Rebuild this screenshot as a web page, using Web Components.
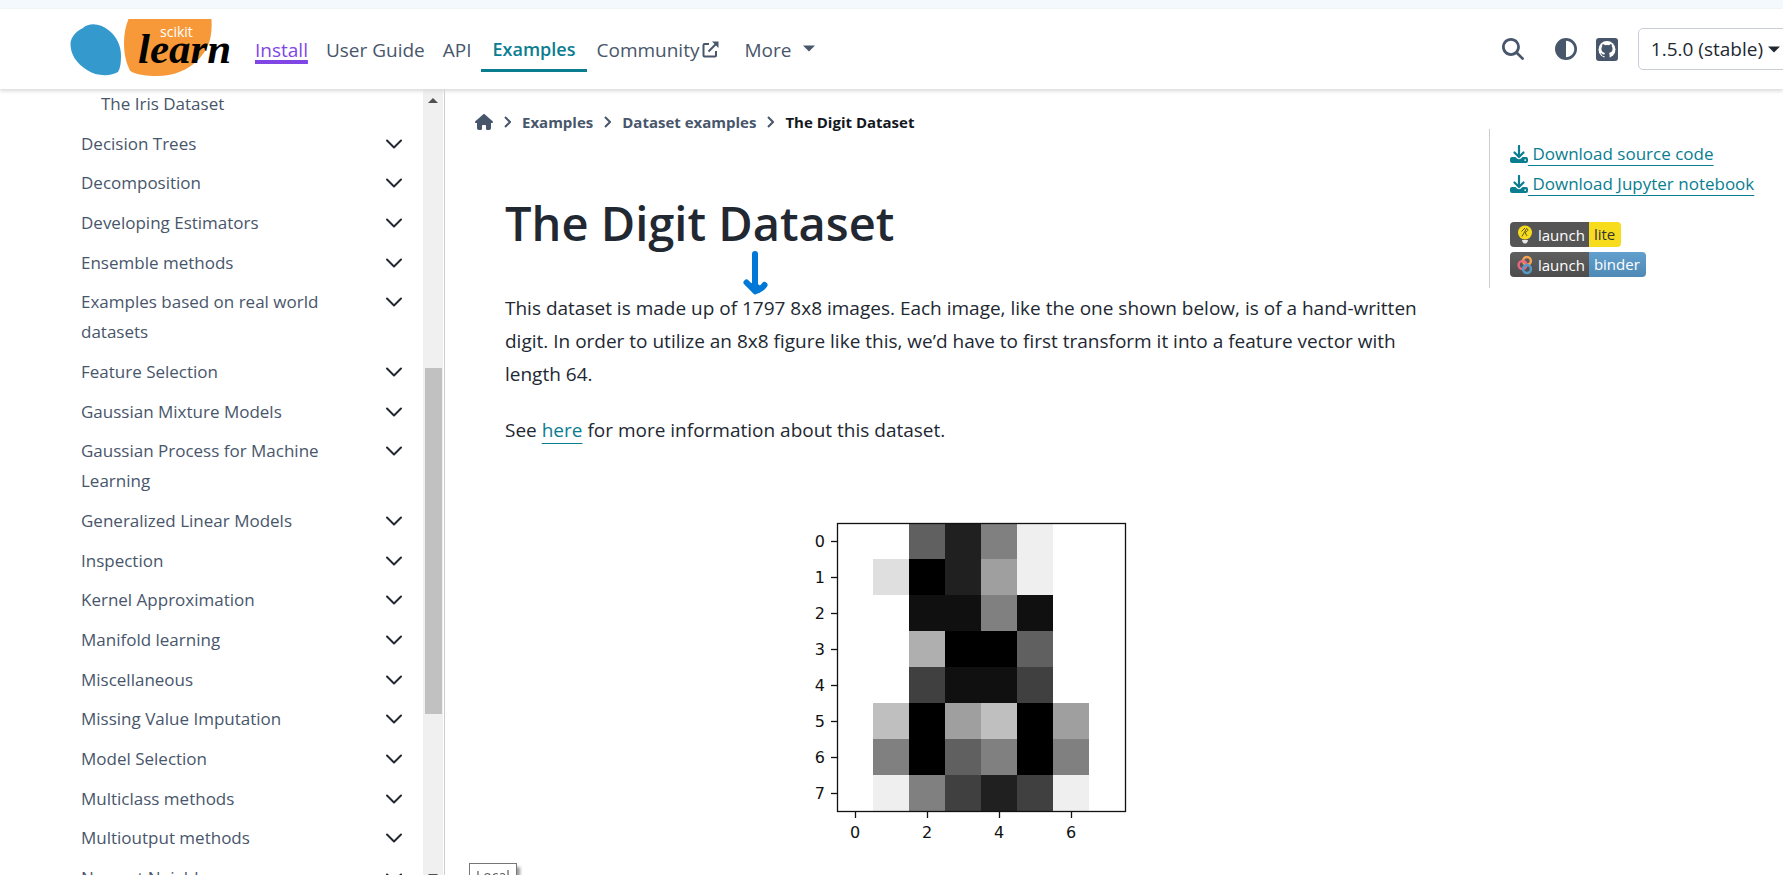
<!DOCTYPE html>
<html lang="en">
<head>
<meta charset="utf-8">
<title>The Digit Dataset — scikit-learn 1.5.0 documentation</title>
<style>
  :root {
    --text: #222832;
    --muted: #48566b;
    --link: #0a7d91;
    --visited: #8045e5;
    --line: #c9ced6;
    --ui: "Open Sans", "Noto Sans", sans-serif;
  }
  html, body { height: 100%; }
  body {
    margin: 0;
    overflow: hidden;
    background: #fff;
    color: var(--text);
    font-family: var(--ui);
  }
</style>
</head>
<body>
<doc-page>
  <doc-header slot="header"></doc-header>
  <doc-sidebar slot="sidebar">
    <doc-entry nested>The Iris Dataset</doc-entry>
    <doc-entry>Decision Trees</doc-entry>
    <doc-entry>Decomposition</doc-entry>
    <doc-entry>Developing Estimators</doc-entry>
    <doc-entry>Ensemble methods</doc-entry>
    <doc-entry>Examples based on real world datasets</doc-entry>
    <doc-entry>Feature Selection</doc-entry>
    <doc-entry>Gaussian Mixture Models</doc-entry>
    <doc-entry>Gaussian Process for Machine Learning</doc-entry>
    <doc-entry>Generalized Linear Models</doc-entry>
    <doc-entry>Inspection</doc-entry>
    <doc-entry>Kernel Approximation</doc-entry>
    <doc-entry>Manifold learning</doc-entry>
    <doc-entry>Miscellaneous</doc-entry>
    <doc-entry>Missing Value Imputation</doc-entry>
    <doc-entry>Model Selection</doc-entry>
    <doc-entry>Multiclass methods</doc-entry>
    <doc-entry>Multioutput methods</doc-entry>
    <doc-entry>Nearest Neighbors</doc-entry>
  </doc-sidebar>
  <doc-breadcrumbs slot="main"></doc-breadcrumbs>
  <doc-article slot="main">
    <digit-plot></digit-plot>
  </doc-article>
  <doc-aside slot="aside"></doc-aside>
  <status-tip slot="tip">Local</status-tip>
</doc-page>

<template id="t-page">
  <style>
    :host { display: flex; flex-direction: column; height: 100vh; }
    .strip { flex: none; height: 9px; background: #f3f9fc; }
    .body { flex: 1; min-height: 0; display: flex; }
    main { flex: 1; min-width: 0; overflow: hidden; padding: 18px 40px 0 30px; }
  </style>
  <div class="strip"></div>
  <slot name="header"></slot>
  <div class="body">
    <slot name="sidebar"></slot>
    <main><slot name="main"></slot></main>
    <slot name="aside"></slot>
  </div>
  <slot name="tip"></slot>
</template>

<template id="t-logo">
  <style>
    :host { display: block; width: 164px; height: 58px; }
    svg { display: block; }
    .small { font: 14px "Open Sans", sans-serif; fill: #fff; }
    .big { font: italic bold 43px "Liberation Serif", serif; fill: #010101; }
  </style>
  <svg width="164" height="58" viewBox="0 0 164 58" role="img" aria-label="scikit-learn">
    <path fill="#3499cd" d="M13 9C19 3.500 30 4 39 11.500C47 18 51 27 51 37C51 43 50.500 49 48 53C41 57.500 26 57.500 17 51C6 44 0.500 35 0.500 25C0.500 18 6.500 12 13 9Z"/>
    <path fill="#f89939" d="M58.500 0H141.500C142.500 18 139 29 129 40C118 51.500 103 57 87 57C76 57 64 55.500 60 51.500C56 44 54 35 54 24C54 15 55.500 7 58.500 0Z"/>
    <text class="small" x="90" y="18">scikit</text>
    <text class="big" x="68" y="44">learn</text>
  </svg>
</template>

<template id="t-header">
  <style>
    :host {
      position: relative; z-index: 2; flex: none; display: flex; align-items: center;
      height: 80px; padding-left: 70px; box-sizing: border-box; overflow: visible;
      background: #fff; box-shadow: 0 2px 4px #d8d8d8; color: var(--muted); font-size: 19px; line-height: 30px;
    }
    .home { margin: 0 12px 2px 0; text-decoration: none; }
    nav { display: flex; align-items: center; flex: 1; }
    nav a { padding: 0 9px; color: inherit; text-decoration: none; white-space: nowrap; }
    nav a, button.more { margin-top: 2px; }
    nav a.visited { color: var(--visited); text-decoration: underline 4px; text-underline-offset: 3px; text-decoration-skip-ink: none; }
    nav a.current {
      margin-top: 0; padding: 8px 12px 5px; border-bottom: 3px solid var(--link);
      color: var(--link); font-size: 18px; font-weight: 600;
    }
    nav svg { margin-left: 3px; vertical-align: -1px; }
    button { font: inherit; color: inherit; background: none; border: 0; padding: 0; }
    .more { display: flex; align-items: center; gap: 9px; margin-left: 7px; padding: 0 9px; }
    .more svg { margin-bottom: 3px; }
    .tools { display: flex; align-items: center; }
    .tools button, .tools a { display: flex; color: inherit; }
    .theme { margin-left: 31px; }
    .git { margin-left: 19px; }
    .tools .version {
      align-items: center; gap: 5px; box-sizing: border-box; height: 42px; margin: 0 -10px 0 20px; padding: 0 12px;
      border: 1px solid var(--line); border-radius: 5px; color: var(--text); white-space: nowrap;
    }
  </style>
  <a class="home" href="#home"><site-logo></site-logo></a>
  <nav aria-label="Site">
    <a class="visited" href="#install">Install</a>
    <a href="#guide">User Guide</a>
    <a href="#api">API</a>
    <a class="current" href="#examples">Examples</a>
    <a href="#community">Community<svg width="17" height="17" viewBox="0 0 17 17" fill="none" stroke="currentColor" stroke-width="2" aria-hidden="true"><path d="M7 3H2.500Q1.500 3 1.500 4V14.500Q1.500 15.500 2.500 15.500H13Q14 15.500 14 14.500V10"/><path d="M6.500 10.500L14.500 2.500"/><path d="M10 0.500H16.500V7Z" fill="currentColor" stroke="none"/></svg></a>
    <button class="more" type="button">More
      <svg width="12" height="7" viewBox="0 0 12 7" aria-hidden="true"><path fill="currentColor" d="M0 .500H12L6 6.500Z"/></svg>
    </button>
  </nav>
  <div class="tools">
    <button type="button" aria-label="Search">
      <svg width="22" height="22" viewBox="0 0 512 512"><path fill="currentColor" d="M416 208c0 45.900-14.900 88.300-40 122.700L502.600 457.400c12.500 12.500 12.500 32.800 0 45.300s-32.800 12.500-45.300 0L330.700 376c-34.400 25.200-76.800 40-122.700 40C93.100 416 0 322.900 0 208S93.100 0 208 0S416 93.100 416 208zM208 352a144 144 0 1 0 0-288 144 144 0 1 0 0 288z"/></svg>
    </button>
    <button class="theme" type="button" aria-label="Colour theme">
      <svg width="22" height="22" viewBox="0 0 512 512"><path fill="currentColor" d="M448 256c0-106-86-192-192-192V448c106 0 192-86 192-192zM0 256a256 256 0 1 1 512 0A256 256 0 1 1 0 256z"/></svg>
    </button>
    <a class="git" href="#github" aria-label="GitHub">
      <svg width="22" height="23" viewBox="0 0 22 23"><rect width="22" height="23" rx="3" fill="currentColor"/><circle cx="11" cy="11.500" r="8.500" fill="#fff"/><path fill="currentColor" d="M6.400 6.400C7.500 6.200 8.500 6.900 9.100 7.300Q11 6.900 12.900 7.300C13.500 6.900 14.500 6.200 15.600 6.400Q16.100 7.600 15.800 8.500C17.300 10.500 16.800 14.500 13 14.900Q13.800 15.600 13.600 18V20.500H8.500V17.900C6.500 18.300 6 17.200 5.500 16.400C5 15.700 4.300 15.400 5 15.200C6.300 15.100 6.500 17 8.500 16.500Q8.500 15.400 9 14.900C5.200 14.500 4.700 10.500 6.200 8.500Q5.900 7.500 6.400 6.400Z"/></svg>
    </a>
    <button class="version" type="button">1.5.0 (stable)
      <svg width="12" height="7" viewBox="0 0 12 7" aria-hidden="true"><path fill="currentColor" d="M0 .500H12L6 6.500Z"/></svg>
    </button>
  </div>
</template>

<template id="t-sidebar">
  <style>
    :host { flex: 0 0 445px; display: flex; box-sizing: border-box; border-right: 1px solid var(--line); }
    nav { flex: 1; min-width: 0; display: flex; flex-direction: column; justify-content: space-between; height: calc(100% + 18px); }
    .bar { flex: none; width: 20px; margin-right: 1px; background: #f0f0f0; display: flex; flex-direction: column; align-items: center; }
    .bar svg { flex: none; display: block; }
    .up { margin-top: 9px; }
    .thumb { width: 17px; height: 44%; margin: 265px 0 auto; background: #c1c1c1; }
    .down { margin-bottom: -5px; }
  </style>
  <nav aria-label="Section navigation"><slot></slot></nav>
  <div class="bar" aria-hidden="true">
    <svg class="up" width="10" height="5" viewBox="0 0 10 5"><path fill="#505050" d="M5 0L10 5H0Z"/></svg>
    <div class="thumb"></div>
    <svg class="down" width="10" height="6" viewBox="0 0 10 6"><path fill="#505050" d="M0 0H10L5 5Z"/></svg>
  </div>
</template>

<template id="t-entry">
  <style>
    :host { display: flex; align-items: flex-start; padding: 0 21px 0 81px; color: var(--muted); font-size: 17px; line-height: 30px; }
    :host([nested]) { padding-left: 101px; }
    :host([nested]) button { display: none; }
    a { flex: 1; color: inherit; text-decoration: none; padding-right: 60px; }
    button { display: flex; flex: none; align-items: center; height: 30px; border: 0; padding: 0; background: none; color: var(--text); }
  </style>
  <a href="#entry"><slot></slot></a>
  <button type="button" aria-label="Expand section">
    <svg width="16" height="10" viewBox="0 0 16 10" fill="none" stroke="currentColor" stroke-width="2" stroke-linecap="round" stroke-linejoin="round"><path d="M1 1.500L8 8.500L15 1.500"/></svg>
  </button>
</template>

<template id="t-crumbs">
  <style>
    :host { display: block; font-size: 15px; font-weight: 700; line-height: 30px; color: var(--muted); }
    ol { display: flex; align-items: center; gap: 11px; margin: 0; padding: 0; list-style: none; }
    li { display: flex; align-items: center; gap: 11px; white-space: nowrap; }
    a { display: flex; color: inherit; text-decoration: none; }
    .current { color: #14181e; }
  </style>
  <nav aria-label="Breadcrumb">
    <ol>
      <li><a href="#home" aria-label="Home"><svg width="18" height="16" viewBox="0 0 576 512"><path fill="currentColor" d="M575.800 255.500c0 18-15 32.100-32 32.100h-32l.700 160.200c0 36-28 64-56 64H392c-22 0-40-17.900-40-40V384c0-17.700-14.300-32-32-32H256c-17.700 0-32 14.300-32 32v88c0 22-18 40-40 40H120c-30 0-56-28-56-64V287.600H32c-18 0-32-14-32-32.100c0-9 3-17 10-24L266.400 8c7-7 15-8 22-8s15 2 21 7L564.800 231.500c8 7 12 15 11 24z"/></svg></a></li>
      <li><crumb-arrow></crumb-arrow><a href="#examples">Examples</a></li>
      <li><crumb-arrow></crumb-arrow><a href="#datasets">Dataset examples</a></li>
      <li class="current"><crumb-arrow></crumb-arrow><span aria-current="page">The Digit Dataset</span></li>
    </ol>
  </nav>
</template>

<template id="t-arrow">
  <style>
    :host { display: flex; color: var(--muted); }
  </style>
  <svg width="7" height="12" viewBox="0 0 7 12" fill="none" stroke="currentColor" stroke-width="2" aria-hidden="true"><path d="M1 1L6 6L1 11"/></svg>
</template>

<template id="t-article">
  <style>
    :host { display: block; margin-left: 30px; font-size: 19px; line-height: 33px; }
    h1 { position: relative; margin: 52px 0 35px; font-size: 47px; line-height: 68px; font-weight: 600; }
    h1 svg { position: absolute; left: 238px; top: 61px; }
    p { margin: 0 0 23px; }
    a { color: var(--link); text-decoration: underline 1px; text-underline-offset: 6px; }
    figure { margin: 31px 0 0; display: flex; justify-content: center; }
  </style>
  <h1>The Digit Dataset<svg width="25" height="46" viewBox="0 0 25 46" fill="none" stroke="#0078d7" stroke-linecap="round" stroke-linejoin="round" aria-hidden="true"><path stroke-width="6" d="M12 4V40"/><path stroke-width="6" d="M3.500 32.500L12 41Q18 40 21.500 35"/><path fill="#0078d7" stroke-width="3" d="M7 35L12 43L18 38L12 34Z"/></svg></h1>
  <p>This dataset is made up of 1797 8x8 images. Each image, like the one shown below, is of a hand-written digit. In order to utilize an 8x8 figure like this, we’d have to first transform it into a feature vector with length 64.</p>
  <p>See <a href="#here">here</a> for more information about this dataset.</p>
  <figure><slot></slot></figure>
</template>

<template id="t-aside">
  <style>
    :host { flex: 0 0 294px; box-sizing: border-box; align-self: flex-start; margin-top: 40px; padding: 10px 20px 11px; border-left: 1px solid var(--line); font-size: 17px; line-height: 30px; }
    .download { display: flex; align-items: center; white-space: nowrap; color: var(--link); text-decoration: none; }
    .download span { text-decoration: underline 1px; text-underline-offset: 5px; }
    .badges { display: flex; flex-direction: column; align-items: flex-start; gap: 5px; margin-top: 23px; }
  </style>
  <a class="download" href="#source"><dl-icon></dl-icon><span>&nbsp;Download source code</span></a>
  <a class="download" href="#notebook"><dl-icon></dl-icon><span>&nbsp;Download Jupyter notebook</span></a>
  <div class="badges">
    <launch-badge kind="lite">
      <svg slot="icon" width="16" height="20" viewBox="0 0 16 20"><circle cx="8" cy="7.500" r="7" fill="#f7dc1e"/><path d="M9.500 3.500Q7 8 5 11.500M9.500 3.500Q13 5 8 7.500L10 11M4.500 6.500L8 3" fill="none" stroke="#5b551f" stroke-width="1"/><path d="M5 15H11L10.500 17L9 18.500H7L5.500 17Z" fill="#e8e8e8"/></svg>
    </launch-badge>
    <launch-badge kind="binder">
      <svg slot="icon" width="16" height="20" viewBox="0 0 16 20" fill="none" stroke-width="2.500"><circle cx="5.500" cy="10" r="3.900" stroke="#e66581"/><circle cx="10" cy="5.800" r="3.900" stroke="#f5a252"/><circle cx="10" cy="14" r="3.900" stroke="#579aca"/><path d="M5.500 6.100A3.900 3.900 0 0 1 9.300 9" stroke="#e66581"/></svg>
    </launch-badge>
  </div>
</template>

<template id="t-dl">
  <style>
    :host { display: block; }
    svg { display: block; }
  </style>
  <svg width="18" height="18" viewBox="0 0 18 18" aria-hidden="true"><path fill="none" stroke="currentColor" stroke-width="2.200" stroke-linecap="round" stroke-linejoin="round" d="M9 1V11M4.500 7.500L9 12L13.500 7.500"/><path fill="currentColor" fill-rule="evenodd" d="M2 12H5.500L7 13.600Q9 15 11 13.600L12.500 12H16Q18 12 18 14V16Q18 18 16 18H2Q0 18 0 16V14Q0 12 2 12ZM15.200 14.200A.900.900 0 1 0 15.200 16A.900.900 0 1 0 15.200 14.200Z"/></svg>
</template>

<template id="t-badge">
  <style>
    :host { display: block; }
    a {
      display: flex; height: 25px; border-radius: 4px; overflow: hidden; text-decoration: none;
      font-size: 15px; line-height: 24px; color: #fff;
    }
    .left { display: flex; align-items: center; gap: 5px; padding: 0 4px 0 7px; background: #555; }
    .right { padding: 0 6px 0 5px; background: #f7dc1e; color: #333; }
    :host([kind="binder"]) .left { background: linear-gradient(#5f5f5f, #4d4d4d); }
    :host([kind="binder"]) .right { background: linear-gradient(#629fce, #4f8ab6); color: #fff; }
  </style>
  <a href="#launch"><span class="left"><slot name="icon"></slot><span>launch</span></span><span class="right"></span></a>
</template>

<template id="t-plot">
  <style>
    :host { display: block; }
    svg { display: block; }
    text { font: 16px "DejaVu Sans", sans-serif; fill: #111; }
  </style>
  <svg width="375" height="375" viewBox="0 0 375 375" role="img" aria-label="An 8 by 8 greyscale image of a digit"></svg>
</template>

<template id="t-tip">
  <style>
    :host {
      position: fixed; left: 469px; bottom: -14px; box-sizing: border-box; height: 26px; padding: 0 6px;
      border: 1px solid #767676; background: #fff; box-shadow: 3px 4px 3px #999; color: #575757; font-size: 14px; line-height: 24px;
    }
  </style>
  <slot></slot>
</template>

<script>
  class DocElement extends HTMLElement {
    constructor() {
      super();
      const source = document.getElementById(this.constructor.template);
      this.attachShadow({ mode: 'open' }).append(source.content.cloneNode(true));
    }
  }

  const define = (name, template, base = DocElement) =>
    customElements.define(name, class extends base { static template = template; });

  class LaunchBadge extends DocElement {
    connectedCallback() {
      this.shadowRoot.querySelector('.right').textContent = this.getAttribute('kind');
    }
  }

  class DigitPlot extends DocElement {
    static pixels = [
      [0, 0, 10, 14, 8, 1, 0, 0],
      [0, 2, 16, 14, 6, 1, 0, 0],
      [0, 0, 15, 15, 8, 15, 0, 0],
      [0, 0, 5, 16, 16, 10, 0, 0],
      [0, 0, 12, 15, 15, 12, 0, 0],
      [0, 4, 16, 6, 4, 16, 6, 0],
      [0, 8, 16, 10, 8, 16, 8, 0],
      [0, 1, 8, 12, 14, 12, 1, 0],
    ];
    connectedCallback() {
      const svg = this.shadowRoot.querySelector('svg');
      const left = 47, top = 45, cell = 36;
      const size = cell * 8 + 1;
      let out = '';
      DigitPlot.pixels.forEach((row, y) => row.forEach((value, x) => {
        const grey = Math.round(255 * (1 - value / 16));
        if (value) out += `<rect x="${left + x * cell}" y="${top + y * cell}" width="${cell}" height="${cell}" fill="rgb(${grey},${grey},${grey})"/>`;
      }));
      out += `<rect x="${left + .5}" y="${top + .5}" width="${size - 1}" height="${size - 1}" fill="none" stroke="#111" stroke-width="1.300"/>`;
      for (let i = 0; i < 8; i++) {
        const mid = i * cell + cell / 2;
        out += `<path stroke="#111" stroke-width="1.300" d="M${left - 6} ${top + mid + .5}H${left}"/>`;
        out += `<text x="${left - 12}" y="${top + mid + 6}" text-anchor="end">${i}</text>`;
        if (i % 2 === 0) {
          out += `<path stroke="#111" stroke-width="1.300" d="M${left + mid + .5} ${top + size}V${top + size + 6}"/>`;
          out += `<text x="${left + mid}" y="${top + size + 26}" text-anchor="middle">${i}</text>`;
        }
      }
      svg.innerHTML = out;
    }
  }

  define('site-logo', 't-logo');
  define('crumb-arrow', 't-arrow');
  define('dl-icon', 't-dl');
  define('launch-badge', 't-badge', LaunchBadge);
  define('digit-plot', 't-plot', DigitPlot);
  define('doc-header', 't-header');
  define('doc-sidebar', 't-sidebar');
  define('doc-entry', 't-entry');
  define('doc-breadcrumbs', 't-crumbs');
  define('doc-article', 't-article');
  define('doc-aside', 't-aside');
  define('status-tip', 't-tip');
  define('doc-page', 't-page');
</script>
</body>
</html>
